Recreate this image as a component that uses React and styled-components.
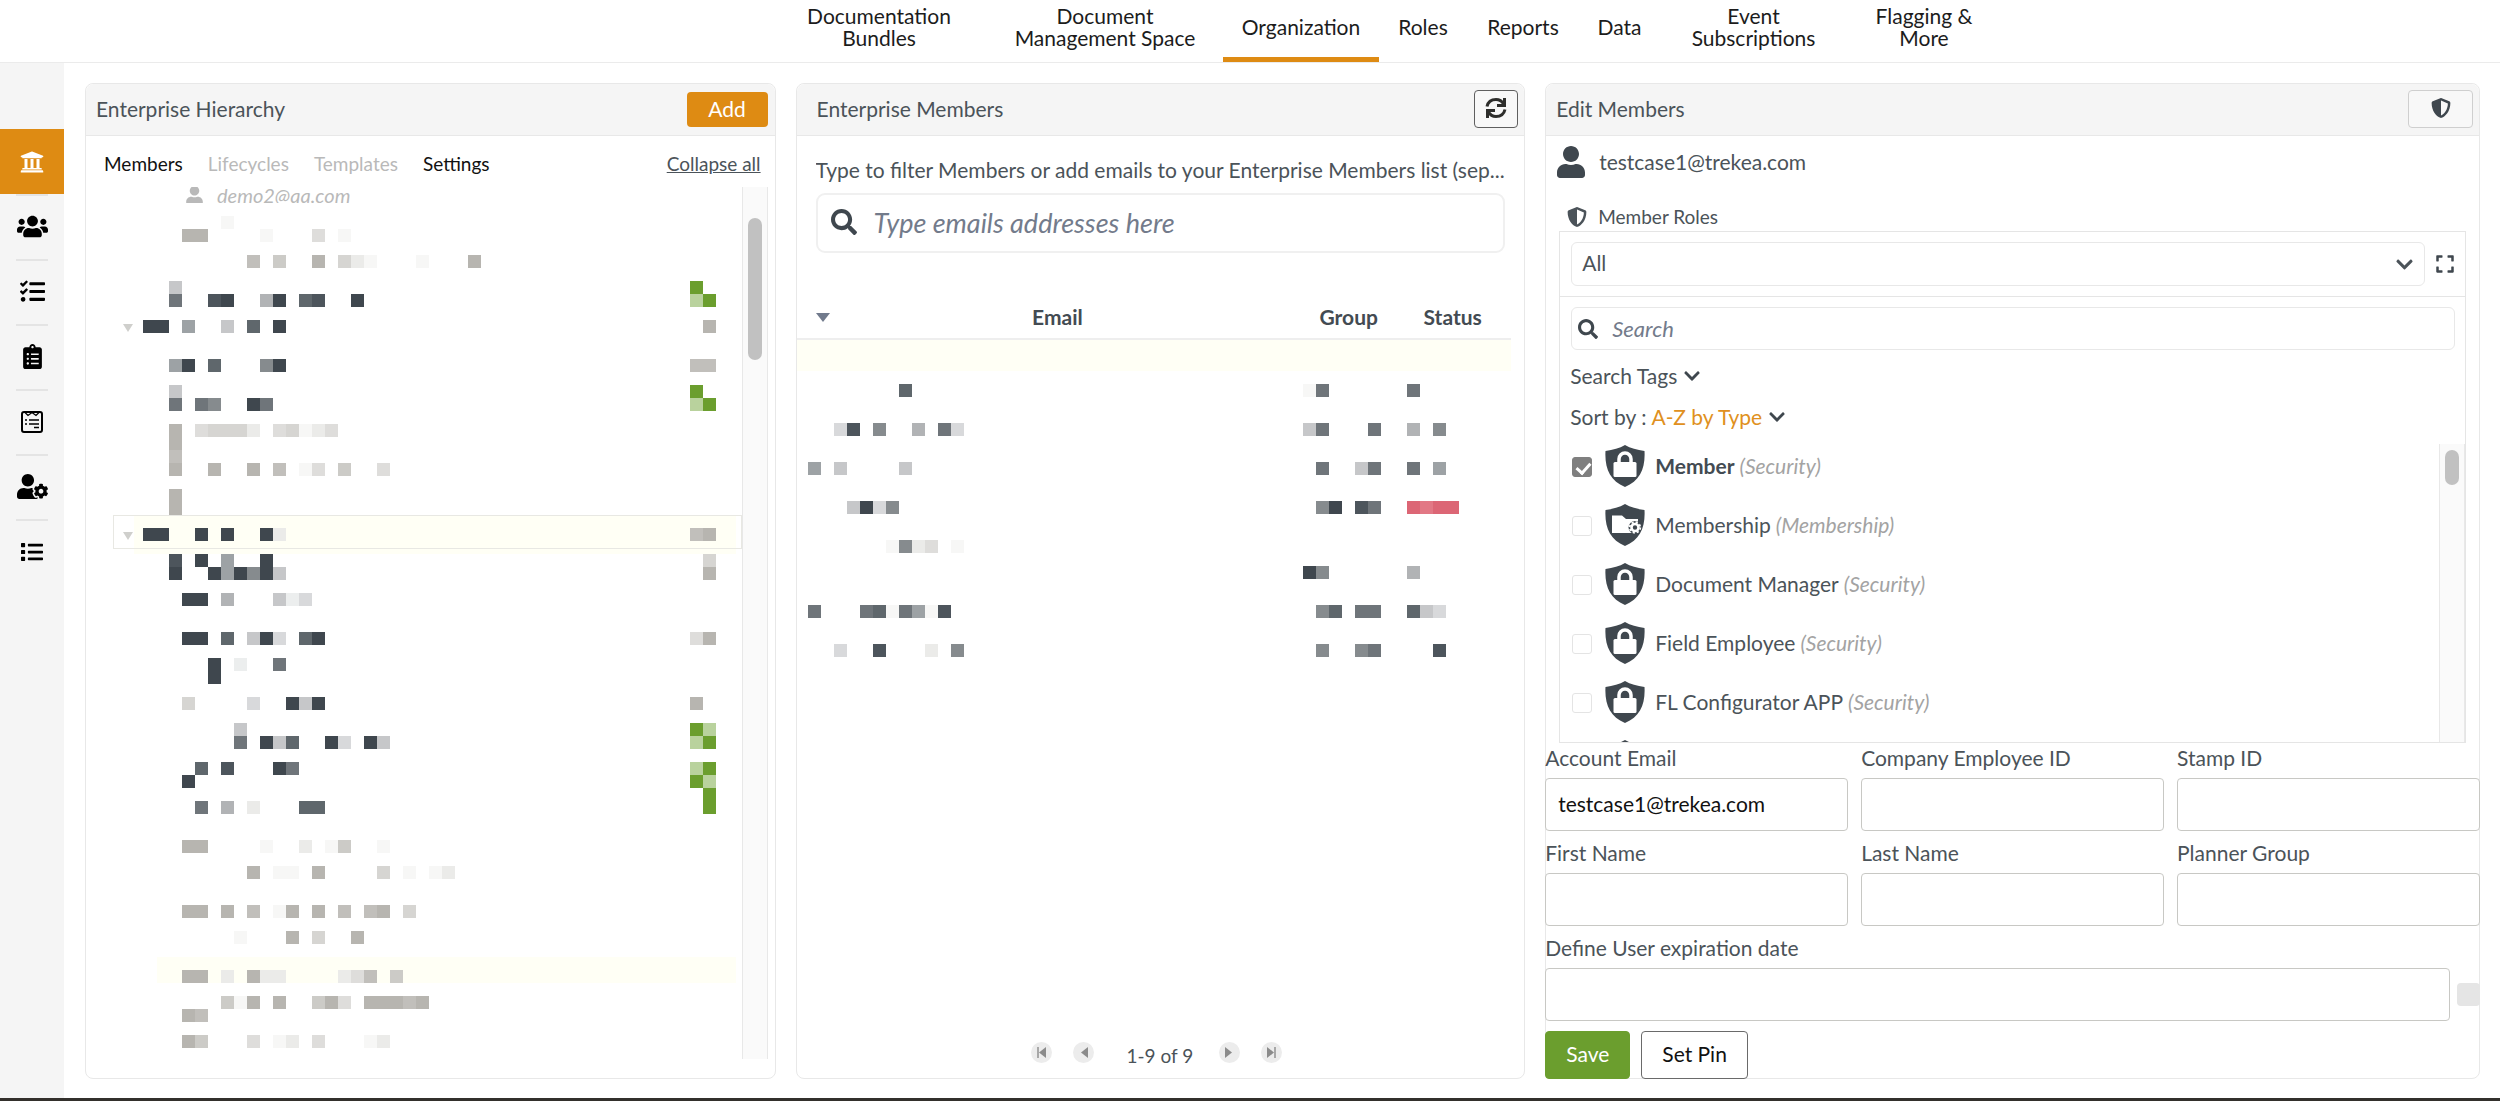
import { useState } from 'react';
import styled, { createGlobalStyle } from 'styled-components';
import {
  FaUniversity,
  FaUsers,
  FaTasks,
  FaClipboardList,
  FaUserCog,
  FaList,
  FaSearch,
  FaShieldAlt,
  FaUser,
  FaExpand,
  FaChevronDown,
} from 'react-icons/fa';

const GlobalStyle = createGlobalStyle`
  * {
    box-sizing: border-box;
  }

  body {
    margin: 0;
    background: #fff;
    color: #4b5359;
    font-family: Lato, 'Liberation Sans', sans-serif;
    font-size: 21px;
    line-height: 24px;
  }

  button, input, select {
    font: inherit;
    color: inherit;
  }

  button {
    cursor: pointer;
  }
`

const Page = styled.div`
  min-height: 100vh;
  display: flex;
  flex-direction: column;
`

const TopNav = styled.nav`
  display: flex;
  justify-content: center;
  height: 63px;
  padding-left: 272px;
  border-bottom: 1px solid #ebebeb;
`

const NavLink = styled.a`
  width: ${(p) => p.$width}px;
  padding: 0 20px 4px;
  display: flex;
  align-items: center;
  justify-content: center;
  text-align: center;
  line-height: 22px;
  color: #1c1c1c;
  text-decoration: none;
  border-bottom: 5px solid ${(p) => (p.$active ? '#de8b13' : 'transparent')};
`

const Main = styled.div`
  flex: 1;
  display: flex;
`

const Sidebar = styled.nav`
  width: 64px;
  flex-shrink: 0;
  padding-top: 66px;
  background: #f5f5f5;
`

const SideLink = styled.a`
  display: flex;
  flex-direction: column;
  align-items: center;
  justify-content: center;
  height: 65px;
  color: ${(p) => (p.$active ? '#fff' : '#000')};
  background: ${(p) => (p.$active ? '#de8b13' : 'transparent')};
`

const SideItem = styled.div`
  &:not(:first-child)::before {
    content: '';
    display: block;
    height: 2px;
    margin: 0 16px -2px;
    background: #e4e4e4;
  }
`

const Columns = styled.main`
  flex: 1;
  min-width: 0;
  display: grid;
  grid-template-columns: minmax(0, 690fr) minmax(0, 729fr) minmax(0, 934fr);
  gap: 20px;
  padding: 20px 20px 19px 21px;
`

const Panel = styled.section`
  display: flex;
  flex-direction: column;
  border: 1px solid #e8e8e8;
  border-radius: 8px;
`

const PanelHeader = styled.header`
  display: flex;
  align-items: center;
  justify-content: space-between;
  height: 52px;
  flex-shrink: 0;
  padding: 0 7px 1px ${(p) => p.$indent || 10}px;
  background: #f5f5f5;
  border-bottom: 1px solid #e8e8e8;
  border-radius: 8px 8px 0 0;
`

const PanelTitle = styled.h2`
  margin: 0;
  font-size: 21px;
  font-weight: 400;
`

const AddButton = styled.button`
  width: 81px;
  height: 35px;
  border: 0;
  border-radius: 4px;
  background: #de8b13;
  color: #fff;
`

const IconButton = styled.button`
  display: flex;
  align-items: center;
  justify-content: center;
  width: ${(p) => p.$width}px;
  height: 38px;
  padding: 0 0 2px;
  margin-right: -1px;
  border: 1px solid ${(p) => p.$border};
  border-radius: 4px;
  background: #f8f8f8;
  color: #3f474e;
`

/* Hierarchy panel */

const TreeTabs = styled.div`
  display: flex;
  align-items: center;
  gap: 25px;
  padding: 15px 14px 10px 18px;
  font-size: 19px;
  line-height: 26px;
`

const TreeTab = styled.button`
  padding: 0;
  border: 0;
  background: none;
  color: #111;

  &:disabled {
    color: #b9b9b9;
    cursor: default;
  }
`

const CollapseLink = styled.a`
  margin-left: auto;
  color: #4b5359;
`

const TreeScroll = styled.div`
  flex: 1;
  min-height: 0;
  display: flex;
  margin: 0 7px 19px 18px;
`

const TreeList = styled.div`
  flex: 1;
  min-width: 0;
  overflow: hidden;
`

const TreeUser = styled.div`
  display: flex;
  align-items: center;
  gap: 13px;
  height: 16px;
  padding-left: 81px;
  overflow: hidden;
  color: #b9b9b9;
  font-size: 20px;
  font-style: italic;
`

const TreeBlock = styled.div`
  position: relative;
  display: flex;
  justify-content: space-between;
  padding-right: 26px;
  background: linear-gradient(#fffff5, #fffff5) no-repeat right 6px top 0 /
    calc(100% - 6px - ${(p) => p.$inset || 0}px) ${(p) => (p.$inset ? '100%' : '0')};

  &::after {
    content: '';
    display: ${(p) => (p.$outline ? 'block' : 'none')};
    position: absolute;
    inset: 0 0 5px 9px;
    border: 1px solid #e8e8e3;
  }
`

const ScrollTrack = styled.div`
  width: 26px;
  flex-shrink: 0;
  padding: ${(p) => p.$top}px 5px 0;
  background: #fafafa;
  border: solid #e8e8e8;
  border-width: 0 1px;
`

const ScrollThumb = styled.div`
  height: ${(p) => p.$size}px;
  border-radius: 7px;
  background: #c1c1c1;
`

/* Members panel */

const FilterHint = styled.label`
  margin: 22px 10px 11px 19px;
  white-space: nowrap;
  overflow: hidden;
  text-overflow: ellipsis;
`

const EmailBox = styled.div`
  display: flex;
  align-items: center;
  gap: 17px;
  height: 60px;
  margin: 0 19px;
  padding: 0 0 2px 13px;
  border: 2px solid #f0f0f0;
  border-radius: 9px;
  color: #3f474e;
`

const SearchInput = styled.input`
  flex: 1;
  min-width: 0;
  padding: 0;
  border: 0;
  outline: 0;
  background: none;
  font-size: ${(p) => p.$size}px;

  &::placeholder {
    color: #737b8b;
    font-style: italic;
    opacity: 1;
  }
`

const MembersTable = styled.table`
  width: calc(100% - 13px);
  margin-top: 43px;
  table-layout: fixed;
  border-collapse: collapse;

  th {
    height: 43px;
    padding: 0;
    border-bottom: 2px solid #eee;
    color: #434b52;
    font-weight: 700;
  }

  td {
    height: 13px;
    padding: 0;
  }

  td:first-child {
    padding-left: 11px;
  }

  td:last-child {
    padding-left: 13px;
  }

  svg {
    display: block;
  }
`

const EmailHead = styled.div`
  display: flex;
  align-items: center;
  padding: 0 18px 0 19px;

  span {
    flex: 1;
  }
`

const SortArrow = styled.span`
  && {
    flex: none;
    border: 7px solid transparent;
    border-top: 9px solid #717a8c;
    border-bottom: 0;
  }
`

const HighlightRow = styled.tr`
  background: #fffff5;

  && td {
    height: 32px;
  }
`

const Pager = styled.div`
  display: flex;
  align-items: center;
  justify-content: center;
  gap: 21px;
  margin-top: auto;
  padding: 0 8px 10px 0;
`

const PagerButton = styled.button`
  display: flex;
  padding: 0;
  border: 0;
  border-radius: 50%;
  background: #ececec;
  color: #8b8b8b;
`

const PagerCount = styled.span`
  padding: 8px 5px 0 12px;
  font-size: 19px;
`

/* Edit panel */

const Account = styled.div`
  display: flex;
  align-items: center;
  gap: 12px;
  padding: 10px 9px 0;
  color: #3f474e;

  span {
    color: #4b5359;
  }
`

const RolesTitle = styled.h3`
  display: flex;
  align-items: center;
  gap: 11px;
  margin: 25px 0 0 21px;
  font-size: 19px;
  font-weight: 400;
  line-height: 28px;
`

const RolesBox = styled.div`
  margin: 0 13px;
  border: 1px solid #e5e5e5;
`

const RolesBar = styled.div`
  display: flex;
  align-items: center;
  gap: 10px;
  height: 65px;
  padding: 0 10px 0 11px;
  border-bottom: 1px solid #e5e5e5;
`

const SelectWrap = styled.div`
  position: relative;
  flex: 1;

  svg {
    position: absolute;
    right: 11px;
    top: 13px;
    pointer-events: none;
  }
`

const RoleSelect = styled.select`
  width: 100%;
  height: 44px;
  padding: 0 10px 2px;
  appearance: none;
  border: 1px solid #e8e8e8;
  border-radius: 6px;
  background: #fff;
`

const PlainButton = styled.button`
  display: flex;
  align-items: center;
  gap: 6px;
  padding: 0;
  border: 0;
  background: none;

  svg {
    color: #3f474e;
  }
`

const RoleSearch = styled.div`
  display: flex;
  align-items: center;
  gap: 14px;
  height: 43px;
  margin: 10px 10px 12px 11px;
  padding: 0 6px;
  border: 1px solid #e8e8e8;
  border-radius: 6px;
  color: #3f474e;
`

const RoleOption = styled.div`
  display: flex;
  align-items: center;
  gap: 5px;
  padding: 0 10px;
  height: 28px;
  margin-bottom: 13px;

  b {
    color: #e09020;
    font-weight: 400;
  }
`

const RoleScroll = styled.div`
  display: flex;
  height: 298px;
`

const RoleList = styled.ul`
  flex: 1;
  margin: 0;
  padding: 1px 0 0 12px;
  list-style: none;
  overflow: hidden;
`

const RoleRow = styled.li`
  margin-bottom: 17px;

  label {
    display: flex;
    align-items: center;
    height: 42px;
  }

  svg {
    margin: 0 10px 0 13px;
  }

  strong {
    color: #434b52;
  }

  em {
    margin-left: 5px;
    color: #a3a3a3;
  }
`

const Tick = styled.input`
  position: relative;
  width: 20px;
  height: 20px;
  margin: 2px 0 0;
  appearance: none;
  border: 1px solid #e4e4e4;
  border-radius: 3px;

  &:checked {
    background: #7f7f7f;
    border-color: #7f7f7f;
  }

  &:checked::after {
    content: '';
    position: absolute;
    left: 6px;
    top: 2px;
    width: 6px;
    height: 11px;
    border: solid #fff;
    border-width: 0 3px 3px 0;
    transform: rotate(42deg);
  }
`

const Form = styled.form`
  display: grid;
  grid-template-columns: repeat(3, minmax(0, 1fr));
  gap: 10px 13px;
  margin: 3px -1px -1px;
`

const Field = styled.div`
  display: flex;
  flex-direction: column;
  gap: 8px;
  grid-column: ${(p) => (p.$wide ? '1 / -1' : 'auto')};
`

const TextInput = styled.input`
  width: 100%;
  height: 53px;
  padding: 0 12px 2px;
  border: 1px solid #c8c8c4;
  border-radius: 4px;
  background: #fff;
  color: #111;
`

const DateLine = styled.div`
  display: flex;
  align-items: center;
  gap: 7px;
`

const DateButton = styled.button`
  width: 23px;
  height: 23px;
  flex-shrink: 0;
  border: 0;
  border-radius: 4px;
  background: #e5e5e5;
`

const Actions = styled.div`
  display: flex;
  gap: 11px;
  grid-column: 1 / -1;
`

const ActionButton = styled.button`
  height: 48px;
  padding: 0 20px 2px;
  border: 1px solid ${(p) => (p.$primary ? '#6b9e2e' : '#6a6a6a')};
  border-radius: 4px;
  background: ${(p) => (p.$primary ? '#6b9e2e' : '#fff')};
  color: ${(p) => (p.$primary ? '#fff' : '#111')};
`

const BottomBar = styled.footer`
  height: 5px;
  background: #33302c;
`

// One letter per shade: capitals are cool greys, small letters warm ones
const SHADES = {
  A: '#3f474e',
  B: '#4d555c',
  C: '#5f676c',
  D: '#6f757a',
  E: '#868b8e',
  F: '#9da2a5',
  G: '#b1b3b5',
  H: '#c6c7c9',
  I: '#d8d9db',
  J: '#eceeee',
  a: '#b7b5b0',
  b: '#c1bfbb',
  c: '#cccbc7',
  d: '#d6d5d2',
  e: '#dedddb',
  f: '#ebebe9',
  g: '#f7f7f6',
  X: '#6b9e2e',
  Y: '#b9d29d',
  R: '#dc6675',
  S: '#e27885',
};

const CELL = 13;

// Each line is a list of runs, "4BA" puts shades B and A at columns 4 and 5.
// A "v" run draws the expander triangle.
const Mosaic = ({ lines, cols }) => (
  <svg width={cols * CELL} height={lines.length * CELL} shapeRendering="crispEdges" aria-hidden="true">
    {lines.map((line, y) =>
      line.split(' ').filter(Boolean).map((run) => {
        const start = parseInt(run, 10);
        const shades = run.replace(/^\d+/, '');
        if (shades === 'v') {
          const left = start * CELL + 6;
          const top = y * CELL + 4;
          return (
            <polygon
              key={run}
              points={`${left},${top} ${left + 10},${top} ${left + 5},${top + 8}`}
              fill="#cfcfcc"
              shapeRendering="auto"
            />
          );
        }
        return shades.split('').map((s, i) => (
          <rect
            key={`${run}-${i}`}
            x={(start + i) * CELL}
            y={y * CELL}
            width={CELL}
            height={CELL}
            fill={SHADES[s]}
          />
        ));
      })
    )}
  </svg>
);

const TREE_BLOCKS = [
  {
    rows: [
      '|', '9g|', '6aa 12g 16e 18g|', '|', '11b 13c 16a 18dfg 24g 28a|', '|', '5H|0X',
      '5D 8BA 12GA 15CB 19A|0YX', '|', '1v 3AA 6F 9H 11C 13A|1a', '|', '|', '5FA 8C 12EA|0bb',
      '|', '5H|0X', '5D 7DE 11AD|0YX', '|', '5a 7edddf 13edgfe|', '5a|', '5b|',
      '5a 8a 11a 13b 15g 16e 18c 21e|', '|', '5a|', '5a|',
    ],
  },
  { inset: 30, outline: true, rows: ['|', '1v 3AA 7A 9A 12A 13f|0ba', '|'] },
  {
    rows: [
      '5B 7A 9F 12A|1d', '5A 8AFAEAH|1a', '|', '6AA 9G 13HJI|', '|', '|',
      '6AA 9C 11HAI 15CA|0ea', '|', '8A 10J 13D|', '8A|', '|', '6d 11I 14AHA|0a', '|',
      '10H|0XY', '10D 12AHC 17AI 20AH|0YX', '|', '7C 9B 13AD|0YX', '6A|0XY', '|1X',
      '7D 9G 11f 15CC|1X', '|', '|', '6aa 12g 15f 17gc 21g|', '|',
      '11a 13gg 16a 21d 23g 25gf|', '|', '|', '6aa 9a 11b 13ga 16a 18b 20ba 23d|', '|',
      '10g 14a 16d 19a|', '|',
    ],
  },
  { inset: 53, rows: ['|', '6aa 9f 11aff 18feb 22c|'] },
  {
    rows: ['|', '9cga 13a 16cae 20aaaba|', '6ab|', '|', '6ac 11e 13gf 16e 20gf|'],
  },
];

const MEMBER_ROWS = [
  '||', '7C|0g 1D|0D', '||', '||', '2IB 5E 8G 10DI|0HD 5D|0G 2E', '||', '||',
  '0F 2H 7H|1D 4HD|0D 2F', '||', '||', '3HAIE|1EA 4BD|0RSRR', '||', '||',
  '6gEfe 11g||', '||', '|0AE|0G', '||', '||', '0D 4DCgDFgB|1EC 4DD|0CHI', '||', '||',
  '2I 5B 9f 11E|1E 4ED|2B', '||',
];

const NAV_ITEMS = [
  { label: 'Documentation Bundles', width: 216 },
  { label: 'Document Management Space', width: 236 },
  { label: 'Organization', width: 156, active: true },
  { label: 'Roles', width: 88 },
  { label: 'Reports', width: 112 },
  { label: 'Data', width: 81 },
  { label: 'Event Subscriptions', width: 187 },
  { label: 'Flagging & More', width: 154 },
];

const ROLES = [
  { name: 'Member', type: 'Security' },
  { name: 'Membership', type: 'Membership' },
  { name: 'Document Manager', type: 'Security' },
  { name: 'Field Employee', type: 'Security' },
  { name: 'FL Configurator APP', type: 'Security' },
];

const FIELDS = [
  { id: 'email', label: 'Account Email', value: 'testcase1@trekea.com' },
  { id: 'employee', label: 'Company Employee ID' },
  { id: 'stamp', label: 'Stamp ID' },
  { id: 'first', label: 'First Name' },
  { id: 'last', label: 'Last Name' },
  { id: 'planner', label: 'Planner Group' },
];

const NoteIcon = () => (
  <svg width="22" height="22" viewBox="0 0 22 22" fill="none" stroke="currentColor" strokeWidth="2">
    <rect x="1" y="1" width="20" height="20" rx="2" />
    <path d="M4 1.5l3 3 4-3 4 3 3-3" strokeWidth="1.3" />
    <path d="M4 9h2M8 9h10M4 13h2M8 13h10M13 16.5h5" strokeWidth="1.4" />
  </svg>
);

const RefreshIcon = () => (
  <svg width="22" height="22" viewBox="0 0 22 22" fill="none" stroke="#2e2e2c" strokeWidth="3">
    <path d="M2 9.5C3 5 6.500 2.500 11 2.500c3.500 0 6 1.700 7.500 4.500" />
    <path d="M19.500 1v7.500H12" />
    <path d="M20 12.500c-1 4.500-4.500 7-9 7-3.500 0-6-1.700-7.500-4.500" />
    <path d="M2.500 21v-7.500H10" />
  </svg>
);

const RoleIcon = ({ type }) => (
  <svg width="40" height="42" viewBox="0 0 40 42">
    <path d="M20 0c5.500 3.200 12 5 19.500 6C40.500 23 35 36 20 42 5 36-.5 23 .5 6 8 5 14.500 3.200 20 0z" fill="#3f474e" />
    {type === 'Security' ? (
      <>
        <path d="M14 19v-5a6 6 0 0 1 12 0v5" fill="none" stroke="#fff" strokeWidth="3.500" />
        <rect x="8.500" y="17" width="23" height="15" rx="1.500" fill="#fff" />
      </>
    ) : (
      <>
        <path d="M7 11.500h10l4 3.500h12v14H7z" fill="#fff" />
        <circle cx="30" cy="23.500" r="6.500" fill="#3f474e" />
        <circle cx="30" cy="23.500" r="3.500" fill="none" stroke="#fff" strokeWidth="2.600" />
        <circle cx="30" cy="23.500" r="5.300" fill="none" stroke="#fff" strokeWidth="1.800" strokeDasharray="2.160 2" />
      </>
    )}
  </svg>
);

const PagerIcon = ({ back, end }) => (
  <svg width="21" height="21" viewBox="0 0 21 21" fill="currentColor">
    {back ? <path d="M15 5v11l-7-5.500z" /> : <path d="M6 5v11l7-5.500z" />}
    {end && <rect x={back ? 6 : 13} y="5" width="2" height="11" opacity="0.7" />}
  </svg>
);

const SIDE_ITEMS = [
  { label: 'Organization', icon: <FaUniversity size={24} />, active: true },
  { label: 'Teams', icon: <FaUsers size={31} /> },
  { label: 'Tasks', icon: <FaTasks size={25} /> },
  { label: 'Clipboard', icon: <FaClipboardList size={25} /> },
  { label: 'Notes', icon: <NoteIcon /> },
  { label: 'User settings', icon: <FaUserCog size={31} /> },
  { label: 'List', icon: <FaList size={22} /> },
];

const HierarchyPanel = () => (
  <Panel>
    <PanelHeader>
      <PanelTitle>Enterprise Hierarchy</PanelTitle>
      <AddButton>Add</AddButton>
    </PanelHeader>
    <TreeTabs>
      <TreeTab>Members</TreeTab>
      <TreeTab disabled>Lifecycles</TreeTab>
      <TreeTab disabled>Templates</TreeTab>
      <TreeTab>Settings</TreeTab>
      <CollapseLink href="#collapse">Collapse all</CollapseLink>
    </TreeTabs>
    <TreeScroll>
      <TreeList>
        <TreeUser>
          <FaUser size={19} />
          demo2@qa.com
        </TreeUser>
        {TREE_BLOCKS.map((block, i) => (
          <TreeBlock key={i} $inset={block.inset} $outline={block.outline}>
            <Mosaic cols={30} lines={block.rows.map((r) => r.split('|')[0])} />
            <Mosaic cols={2} lines={block.rows.map((r) => r.split('|')[1])} />
          </TreeBlock>
        ))}
      </TreeList>
      <ScrollTrack $top={31}>
        <ScrollThumb $size={142} />
      </ScrollTrack>
    </TreeScroll>
  </Panel>
);

const MembersPanel = () => (
  <Panel>
    <PanelHeader $indent={20}>
      <PanelTitle>Enterprise Members</PanelTitle>
      <IconButton $width={44} $border="#5f5f5f" aria-label="Refresh">
        <RefreshIcon />
      </IconButton>
    </PanelHeader>
    <FilterHint htmlFor="emails">
      Type to filter Members or add emails to your Enterprise Members list (sep...
    </FilterHint>
    <EmailBox>
      <FaSearch size={26} />
      <SearchInput id="emails" $size={27} placeholder="Type emails addresses here" />
    </EmailBox>
    <MembersTable>
      <colgroup>
        <col />
        <col width="91" />
        <col width="117" />
      </colgroup>
      <thead>
        <tr>
          <th>
            <EmailHead>
              <SortArrow />
              <span>Email</span>
            </EmailHead>
          </th>
          <th>Group</th>
          <th>Status</th>
        </tr>
      </thead>
      <tbody>
        <HighlightRow>
          <td colSpan={3} />
        </HighlightRow>
        {MEMBER_ROWS.map((row, i) => {
          const [email, group, status] = row.split('|');
          return (
            <tr key={i}>
              <td><Mosaic cols={12} lines={[email]} /></td>
              <td><Mosaic cols={6} lines={[group]} /></td>
              <td><Mosaic cols={4} lines={[status]} /></td>
            </tr>
          );
        })}
      </tbody>
    </MembersTable>
    <Pager>
      <PagerButton aria-label="First page"><PagerIcon back end /></PagerButton>
      <PagerButton aria-label="Previous page"><PagerIcon back /></PagerButton>
      <PagerCount>1-9 of 9</PagerCount>
      <PagerButton aria-label="Next page"><PagerIcon /></PagerButton>
      <PagerButton aria-label="Last page"><PagerIcon end /></PagerButton>
    </Pager>
  </Panel>
);

const EditPanel = () => {
  const [checked, setChecked] = useState(['Member']);

  const toggleRole = (name) => {
    setChecked((prev) => (prev.includes(name) ? prev.filter((n) => n !== name) : [...prev, name]));
  };

  return (
    <Panel>
      <PanelHeader>
        <PanelTitle>Edit Members</PanelTitle>
        <IconButton $width={65} $border="#cfcfcf" aria-label="Roles">
          <FaShieldAlt size={20} />
        </IconButton>
      </PanelHeader>
      <Account>
        <FaUser size={32} />
        <span>testcase1@trekea.com</span>
      </Account>
      <RolesTitle>
        <FaShieldAlt size={20} />
        Member Roles
      </RolesTitle>
      <RolesBox>
        <RolesBar>
          <SelectWrap>
            <RoleSelect aria-label="Role group">
              <option>All</option>
            </RoleSelect>
            <FaChevronDown size={19} />
          </SelectWrap>
          <PlainButton aria-label="Expand">
            <FaExpand size={20} />
          </PlainButton>
        </RolesBar>
        <RoleSearch>
          <FaSearch size={20} />
          <SearchInput $size={22} placeholder="Search" aria-label="Search roles" />
        </RoleSearch>
        <RoleOption>
          <PlainButton>
            Search Tags <FaChevronDown size={18} />
          </PlainButton>
        </RoleOption>
        <RoleOption>
          Sort by :
          <PlainButton>
            <b>A-Z by Type</b> <FaChevronDown size={18} />
          </PlainButton>
        </RoleOption>
        <RoleScroll>
          <RoleList>
            {ROLES.map((role) => {
              const isOn = checked.includes(role.name);
              return (
                <RoleRow key={role.name}>
                  <label>
                    <Tick type="checkbox" checked={isOn} onChange={() => toggleRole(role.name)} />
                    <RoleIcon type={role.type} />
                    {isOn ? <strong>{role.name}</strong> : role.name}
                    <em>({role.type})</em>
                  </label>
                </RoleRow>
              );
            })}
            <RoleRow>
              <label>
                <Tick type="checkbox" />
                <RoleIcon type="Security" />
              </label>
            </RoleRow>
          </RoleList>
          <ScrollTrack $top={6}>
            <ScrollThumb $size={35} />
          </ScrollTrack>
        </RoleScroll>
      </RolesBox>
      <Form onSubmit={(e) => e.preventDefault()}>
        {FIELDS.map((field) => (
          <Field key={field.id}>
            <label htmlFor={field.id}>{field.label}</label>
            <TextInput id={field.id} defaultValue={field.value} />
          </Field>
        ))}
        <Field $wide>
          <label htmlFor="expiration">Define User expiration date</label>
          <DateLine>
            <TextInput id="expiration" />
            <DateButton type="button" aria-label="Pick a date" />
          </DateLine>
        </Field>
        <Actions>
          <ActionButton $primary type="submit">Save</ActionButton>
          <ActionButton type="button">Set Pin</ActionButton>
        </Actions>
      </Form>
    </Panel>
  );
};

export default function App() {
  return (
    <Page>
      <GlobalStyle />
      <TopNav>
        {NAV_ITEMS.map((item) => (
          <NavLink key={item.label} href="#nav" $width={item.width} $active={item.active}>
            {item.label}
          </NavLink>
        ))}
      </TopNav>
      <Main>
        <Sidebar>
          {SIDE_ITEMS.map((item) => (
            <SideItem key={item.label}>
              <SideLink href="#side" aria-label={item.label} $active={item.active}>
                {item.icon}
              </SideLink>
            </SideItem>
          ))}
        </Sidebar>
        <Columns>
          <HierarchyPanel />
          <MembersPanel />
          <EditPanel />
        </Columns>
      </Main>
      <BottomBar />
    </Page>
  );
}
